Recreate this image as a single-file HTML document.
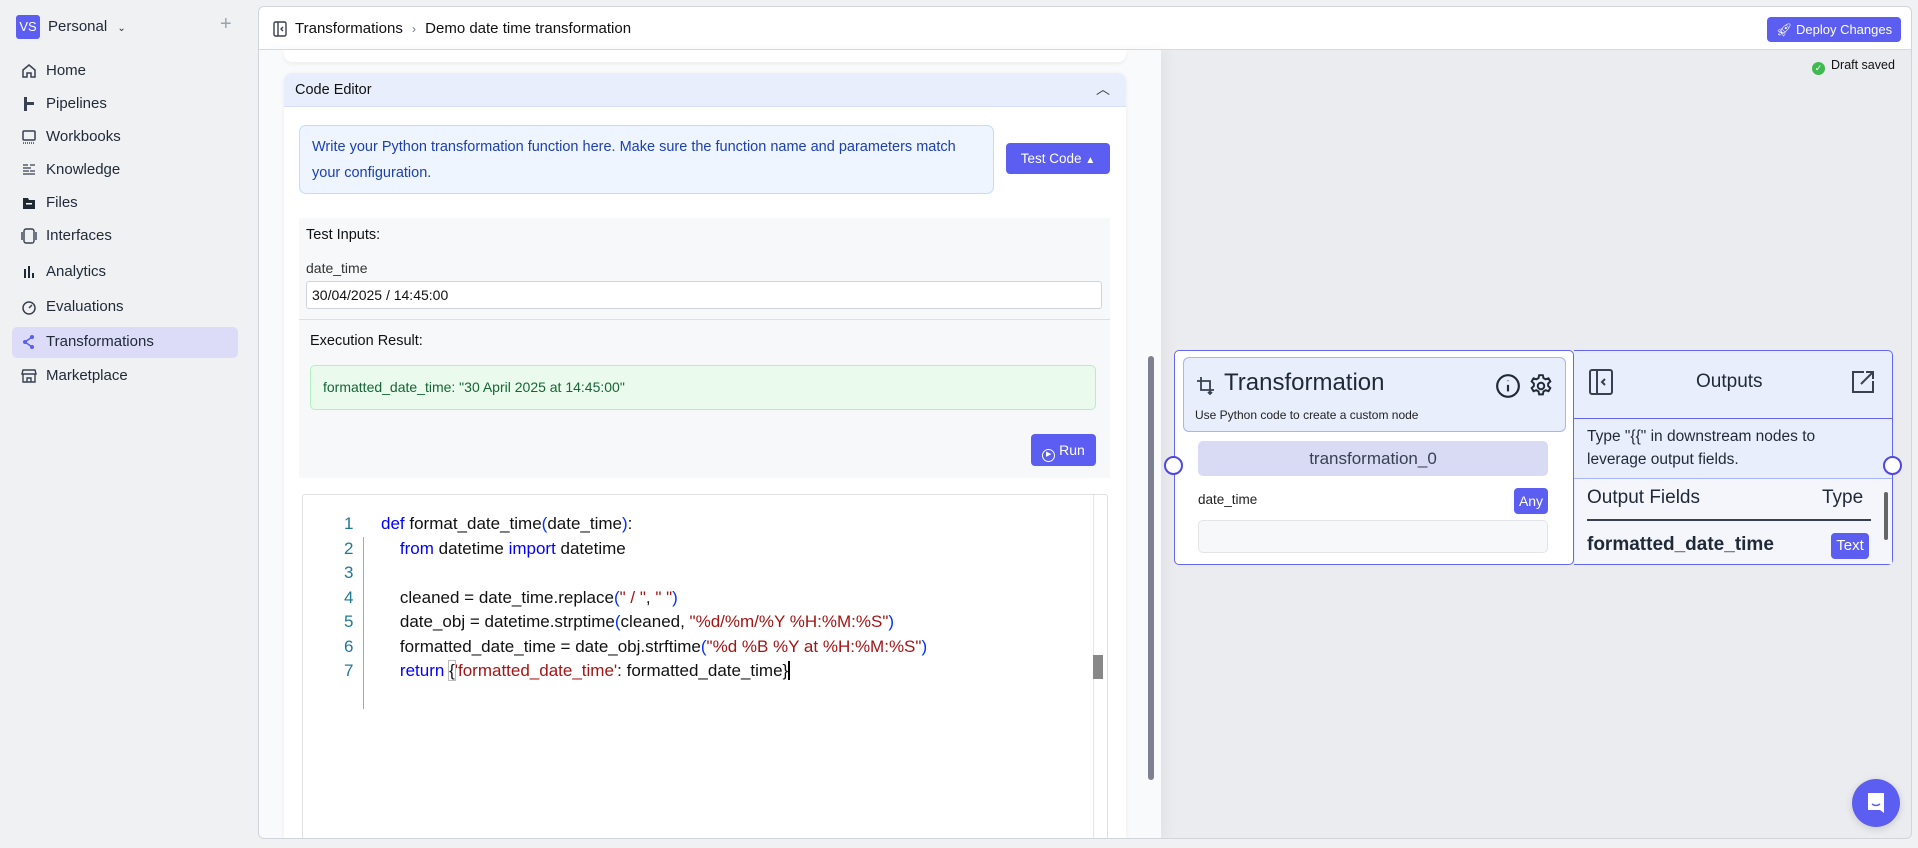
<!DOCTYPE html>
<html><head><meta charset="utf-8"><style>
*{box-sizing:border-box;margin:0;padding:0}
body{width:1918px;height:848px;background:#f0f1f3;font-family:"Liberation Sans",sans-serif;color:#1f2937;position:relative;overflow:hidden}
.a{position:absolute}
.nav{position:absolute;left:21px;font-size:15px;color:#1f2937;display:flex;align-items:center;gap:0}
.nav svg{width:16px;height:16px;margin-right:9px}
.code{font-family:"Liberation Sans",sans-serif;font-size:17px;white-space:pre;color:#111}
.kw{color:#0000ff}.st{color:#a31515}.br{color:#0431fa}
</style></head><body>
<!-- sidebar -->
<div class="a" style="left:16px;top:15px;width:24px;height:24px;background:#5b5ef0;border-radius:3px;color:#fff;font-size:13px;line-height:24px;text-align:center">VS</div>
<div class="a" style="left:48px;top:18px;font-size:15px;color:#1f2937">Personal <span style="font-size:10px;margin-left:6px">⌄</span></div>
<div class="a" style="left:220px;top:13px;font-size:20px;color:#9ca3af">+</div>
<div class="a" style="left:12px;top:327px;width:226px;height:31px;background:#dcdcf8;border-radius:5px"></div>
<div class="nav" style="top:62px"><svg viewBox="0 0 16 16" fill="none" stroke="#374151" stroke-width="1.5"><path d="M2 7l6-5 6 5v7H10V10H6v4H2z"/></svg>Home</div>
<div class="nav" style="top:95px"><svg viewBox="0 0 16 16" fill="#374151"><rect x="3" y="1" width="3" height="14"/><rect x="6" y="6" width="7" height="3"/></svg>Pipelines</div>
<div class="nav" style="top:128px"><svg viewBox="0 0 16 16" fill="none" stroke="#374151" stroke-width="1.5"><rect x="2" y="2" width="12" height="9" rx="1"/><path d="M2 14h12" stroke-dasharray="1 1"/></svg>Workbooks</div>
<div class="nav" style="top:161px"><svg viewBox="0 0 16 16" fill="none" stroke="#374151" stroke-width="1.3"><path d="M2 3h5M9 3h5M2 6h8M2 9h6M9 9h5M2 12h12"/></svg>Knowledge</div>
<div class="nav" style="top:194px"><svg viewBox="0 0 16 16" fill="#1f2937"><path d="M2 3h5l1 2h6v9H2z"/><rect x="5" y="8" width="6" height="1.5" fill="#fff"/></svg>Files</div>
<div class="nav" style="top:227px"><svg viewBox="0 0 16 16" fill="none" stroke="#374151" stroke-width="1.4"><rect x="3" y="1" width="10" height="14" rx="2"/><path d="M1 4v8M15 4v8"/></svg>Interfaces</div>
<div class="nav" style="top:263px"><svg viewBox="0 0 16 16" fill="#1f2937"><rect x="3" y="5" width="2" height="9"/><rect x="7" y="2" width="2" height="12"/><rect x="11" y="9" width="2" height="5"/></svg>Analytics</div>
<div class="nav" style="top:298px"><svg viewBox="0 0 16 16" fill="none" stroke="#374151" stroke-width="1.5"><circle cx="8" cy="9" r="6"/><path d="M8 9l3-3"/></svg>Evaluations</div>
<div class="nav" style="top:333px"><svg viewBox="0 0 16 16" fill="#5b5ef0"><circle cx="11" cy="3" r="2"/><circle cx="4" cy="8" r="2"/><circle cx="11" cy="13" r="2"/><path d="M11 3L4 8l7 5" stroke="#5b5ef0" stroke-width="1.5" fill="none"/></svg>Transformations</div>
<div class="nav" style="top:367px"><svg viewBox="0 0 16 16" fill="none" stroke="#374151" stroke-width="1.4"><path d="M2 2h12l1 4H1z"/><path d="M2 6v8h12V6M6 14v-4h4v4"/></svg>Marketplace</div>

<!-- main panel -->
<div class="a" style="left:258px;top:6px;width:1654px;height:833px;background:#ebecf0;border:1px solid #d1d5db;border-radius:6px;overflow:hidden">
  <div class="a" style="left:0;top:0;width:1654px;height:43px;background:#fff;border-bottom:1px solid #d8dbe0"></div>
  <svg class="a" style="left:14px;top:14px" width="14" height="16" viewBox="0 0 14 16" fill="none" stroke="#374151" stroke-width="1.4"><rect x="1" y="1" width="12" height="14" rx="1.5"/><path d="M5 1v14M10 6l-2 2 2 2"/></svg>
  <div class="a" style="left:36px;top:13px;font-size:15px;color:#111">Transformations <span style="color:#6b7280;font-size:12px;margin:0 5px">›</span> Demo date time transformation</div>
  <div class="a" style="left:1508px;top:10px;width:134px;height:25px;background:#5b5ef0;border-radius:4px;color:#fff;font-size:13px;line-height:25px;text-align:center">🚀︎ Deploy Changes</div>
  <div class="a" style="left:1553px;top:51px;font-size:12.5px;color:#111"><span style="display:inline-block;width:13px;height:13px;border-radius:50%;background:#3fb950;color:#fff;font-size:9px;line-height:13px;text-align:center;vertical-align:-2px;margin-right:6px">✓</span>Draft saved</div>

  <!-- left editor panel -->
  <div class="a" style="left:0;top:43px;width:902px;height:790px;background:#f9fafb;box-shadow:6px 0 12px rgba(0,0,0,0.04)"></div>
  <div class="a" style="left:25px;top:43px;width:842px;height:12px;background:#fff;border-radius:0 0 8px 8px;box-shadow:0 2px 4px rgba(0,0,0,0.05)"></div>
  <div class="a" style="left:25px;top:66px;width:842px;height:780px;background:#fff;border-radius:8px 8px 0 0;box-shadow:0 1px 4px rgba(0,0,0,0.06)">
    <div class="a" style="left:0;top:0;width:842px;height:34px;background:#e8eefc;border-bottom:1px solid #d6e0f8;border-radius:8px 8px 0 0"></div>
    <div class="a" style="left:11px;top:9px;font-size:14.5px;color:#111">Code Editor</div>
    <div class="a" style="left:812px;top:6px;font-size:14px;color:#444">︿</div>
    <div class="a" style="left:15px;top:52px;width:695px;height:69px;background:#eef5fe;border:1px solid #c6dbf7;border-radius:7px;color:#1e40af;font-size:14.5px;line-height:26px;padding:8px 12px">Write your Python transformation function here. Make sure the function name and parameters match your configuration.</div>
    <div class="a" style="left:722px;top:70px;width:104px;height:31px;background:#5b5ef0;border-radius:4px;color:#fff;font-size:13.5px;line-height:31px;text-align:center">Test Code <span style="font-size:10px">▲</span></div>
    <div class="a" style="left:15px;top:145px;width:811px;height:260px;background:#f7f8fa"></div>
    <div class="a" style="left:22px;top:154px;font-size:14.5px;color:#111">Test Inputs:</div>
    <div class="a" style="left:22px;top:187px;font-size:14px;color:#333">date_time</div>
    <div class="a" style="left:22px;top:208px;width:796px;height:28px;background:#fff;border:1px solid #d1d5db;border-radius:3px;font-size:14px;line-height:26px;padding-left:5px;color:#111">30/04/2025 / 14:45:00</div>
    <div class="a" style="left:15px;top:246px;width:811px;height:1px;background:#dcdfe4"></div>
    <div class="a" style="left:26px;top:260px;font-size:14.5px;color:#111">Execution Result:</div>
    <div class="a" style="left:26px;top:292px;width:786px;height:45px;background:#eafbee;border:1px solid #b4efc4;border-radius:5px;color:#166534;font-size:14px;line-height:43px;padding-left:12px">formatted_date_time: "30 April 2025 at 14:45:00"</div>
    <div class="a" style="left:747px;top:361px;width:65px;height:32px;background:#5b5ef0;border-radius:4px;color:#fff;font-size:14px;line-height:32px;text-align:center"><span style="display:inline-block;width:13px;height:13px;border:1.5px solid #fff;border-radius:50%;font-size:7px;line-height:10px;vertical-align:-1px">▶</span> Run</div>
    <div class="a" style="left:18px;top:421px;width:806px;height:360px;background:#fff;border:1px solid #e0e0e0;border-radius:3px">
      <div class="a" style="left:790px;top:0;width:1px;height:360px;background:#e5e5e5"></div>
      <div class="a" style="left:790px;top:160px;width:10px;height:24px;background:#888"></div>
      <div class="a" style="left:60px;top:42px;width:1px;height:172px;background:#aaa"></div>
      <div class="a code" style="left:41px;top:17px;color:#237893;line-height:24.5px;text-align:right">1
2
3
4
5
6
7</div>
      <div class="a code" style="left:78px;top:17px;line-height:24.5px"><span class="kw">def</span> format_date_time<span class="br">(</span>date_time<span class="br">)</span>:
    <span class="kw">from</span> datetime <span class="kw">import</span> datetime

    cleaned = date_time.replace<span class="br">(</span><span class="st">" / "</span>, <span class="st">" "</span><span class="br">)</span>
    date_obj = datetime.strptime<span class="br">(</span>cleaned, <span class="st">"%d/%m/%Y %H:%M:%S"</span><span class="br">)</span>
    formatted_date_time = date_obj.strftime<span class="br">(</span><span class="st">"%d %B %Y at %H:%M:%S"</span><span class="br">)</span>
    <span class="kw">return</span> <span style="outline:1px solid #bbb">{</span><span class="st">'formatted_date_time'</span>: formatted_date_time<span style="border-right:2px solid #000">}</span></div>
    </div>
  </div>
  <!-- scrollbar -->
  <div class="a" style="left:889px;top:349px;width:6px;height:424px;background:#7c8090;border-radius:3px"></div>

  <!-- transformation node -->
  <div class="a" style="left:915px;top:343px;width:400px;height:215px;background:#fff;border:1.5px solid #6366f1;border-radius:5px"></div>
  <div class="a" style="left:924px;top:350px;width:383px;height:75px;background:#e8eefc;border:1px solid #a5b4fc;border-radius:6px"></div>
  <svg class="a" style="left:937px;top:369px" width="20" height="20" viewBox="0 0 20 20" fill="none" stroke="#374151" stroke-width="1.8"><path d="M5 1v13h13M1 5h13v13M12 16l2 2 2-2" /></svg>
  <div class="a" style="left:965px;top:362px;font-size:24px;color:#1f2937">Transformation</div>
  <svg class="a" style="left:1236px;top:366px" width="26" height="26" viewBox="0 0 24 24" fill="none" stroke="#1f2937" stroke-width="2"><circle cx="12" cy="12" r="10"/><path d="M12 11v6M12 7v.5"/></svg>
  <svg class="a" style="left:1269px;top:366px" width="26" height="26" viewBox="0 0 24 24" fill="none" stroke="#1f2937" stroke-width="1.8"><circle cx="12" cy="12" r="3"/><path d="M10.3 2h3.4l.6 2.7 2 1.1 2.6-.9 1.7 2.9-2 1.9v2.3l2 1.9-1.7 2.9-2.6-.9-2 1.1-.6 2.7h-3.4l-.6-2.7-2-1.1-2.6.9-1.7-2.9 2-1.9V9.7l-2-1.9 1.7-2.9 2.6.9 2-1.1z"/></svg>
  <div class="a" style="left:936px;top:401px;font-size:12px;color:#222">Use Python code to create a custom node</div>
  <div class="a" style="left:939px;top:434px;width:350px;height:35px;background:#d9daf4;border-radius:5px;font-size:17px;color:#374151;text-align:center;line-height:35px">transformation_0</div>
  <div class="a" style="left:939px;top:485px;font-size:13.5px;color:#222">date_time</div>
  <div class="a" style="left:1255px;top:481px;width:34px;height:26px;background:#5b5ef0;border-radius:4px;color:#fff;font-size:14px;line-height:26px;text-align:center">Any</div>
  <div class="a" style="left:939px;top:513px;width:350px;height:33px;background:#f7f8fa;border:1px solid #e2e4e8;border-radius:5px"></div>
  <div class="a" style="left:905px;top:449px;width:19px;height:19px;border-radius:50%;background:#fff;border:2px solid #4f46e5"></div>

  <!-- outputs node -->
  <div class="a" style="left:1315px;top:343px;width:319px;height:215px;background:#e8eefc;border:1.5px solid #6366f1;border-left:none;border-radius:0 5px 5px 0"></div>
  <div class="a" style="left:1315px;top:411px;width:318px;height:1px;background:#6366f1"></div>
  <div class="a" style="left:1315px;top:471px;width:318px;height:1px;background:#a5b4fc"></div>
  <div class="a" style="left:1316px;top:472px;width:317px;height:85px;background:#f5f6fb"></div>
  <svg class="a" style="left:1330px;top:362px" width="24" height="26" viewBox="0 0 24 26" fill="none" stroke="#374151" stroke-width="2"><rect x="1" y="1" width="22" height="24" rx="2"/><path d="M8 1v24M16 10l-3 3 3 3"/></svg>
  <div class="a" style="left:1437px;top:364px;font-size:19px;color:#1f2937">Outputs</div>
  <svg class="a" style="left:1592px;top:363px" width="24" height="24" viewBox="0 0 24 24" fill="none" stroke="#374151" stroke-width="2"><path d="M13 2H2v20h20V11M10 14L22 2M15 2h7v7"/></svg>
  <div class="a" style="left:1328px;top:418px;width:270px;font-size:15.5px;line-height:23px;color:#1f2937">Type "{{" in downstream nodes to leverage output fields.</div>
  <div class="a" style="left:1328px;top:480px;font-size:19px;color:#1f2937">Output Fields</div>
  <div class="a" style="left:1563px;top:480px;font-size:19px;color:#1f2937">Type</div>
  <div class="a" style="left:1328px;top:512px;width:284px;height:1.5px;background:#374151"></div>
  <div class="a" style="left:1328px;top:527px;font-size:19px;font-weight:bold;color:#1f2937">formatted_date_time</div>
  <div class="a" style="left:1572px;top:526px;width:38px;height:26px;background:#5b5ef0;border-radius:4px;color:#fff;font-size:15px;line-height:26px;text-align:center">Text</div>
  <div class="a" style="left:1625px;top:485px;width:4px;height:48px;background:#666;border-radius:2px"></div>
  <div class="a" style="left:1624px;top:449px;width:19px;height:19px;border-radius:50%;background:#fff;border:2px solid #4f46e5"></div>

  <!-- chat -->
  <div class="a" style="left:1593px;top:772px;width:48px;height:48px;border-radius:50%;background:#5b5ef0;box-shadow:0 2px 8px rgba(0,0,0,0.15)"></div>
  <svg class="a" style="left:1607px;top:785px" width="20" height="22" viewBox="0 0 20 22"><path d="M2 1h16v20l-4-3H2z" fill="#fff"/><path d="M6 12q4 3 8 0" stroke="#5b5ef0" stroke-width="1.5" fill="none"/></svg>
</div>
</body></html>
